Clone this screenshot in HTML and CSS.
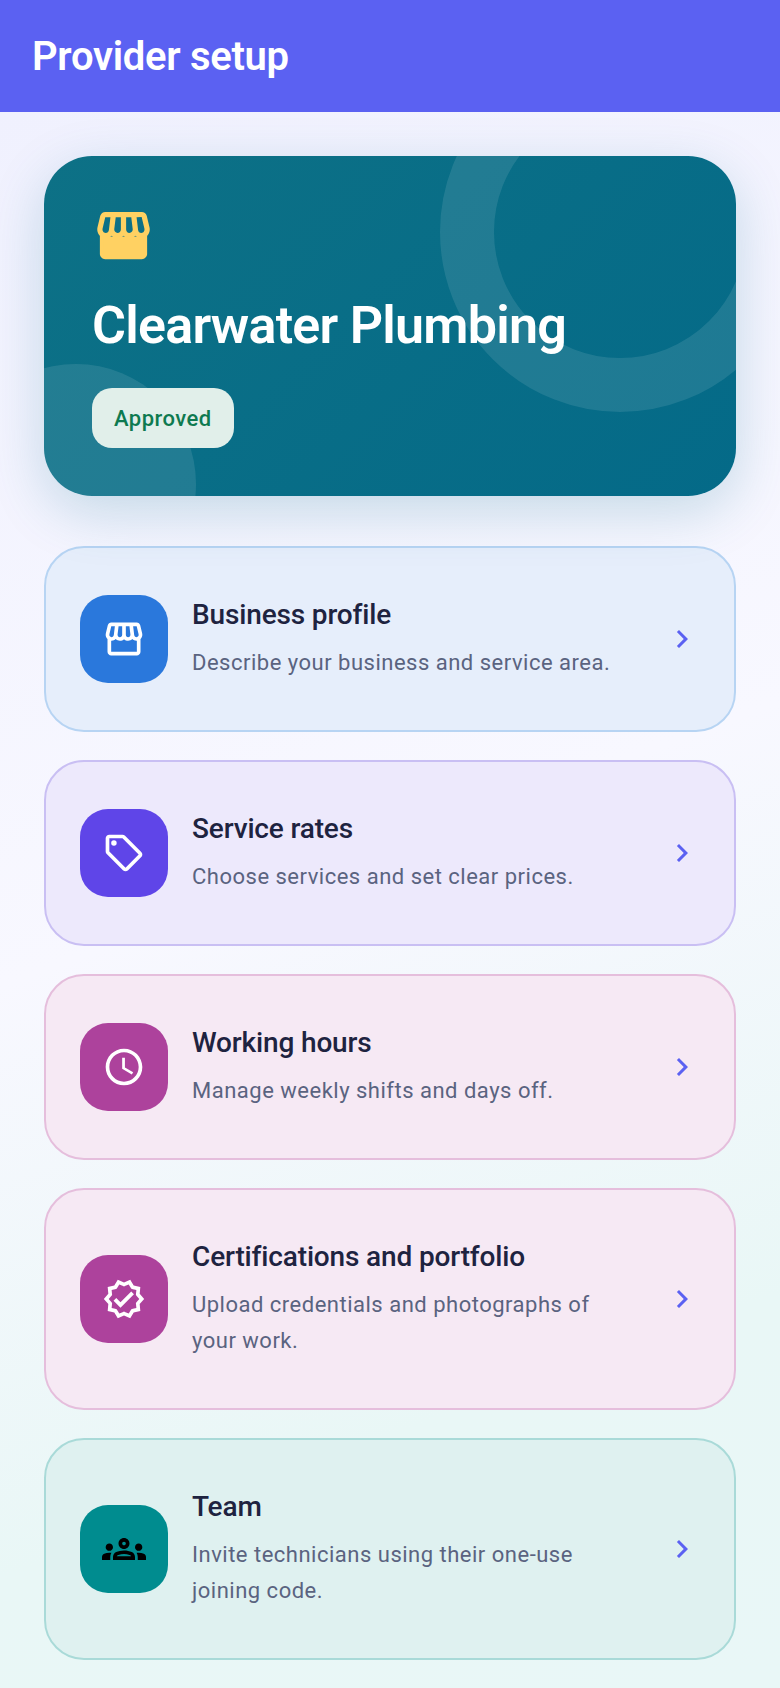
FILE: index.html
```html
<!DOCTYPE html>
<html lang="en">
<head>
<meta charset="utf-8">
<title>Provider setup</title>
<link rel="stylesheet" href="styles.css">
</head>
<body>
<header class="appbar"><h1 class="appbar-title">Provider setup</h1></header>
<main class="content">
  <section class="hero">
    <span class="hero-ring"></span>
    <span class="hero-disc"></span>
    <svg class="hero-icon" viewBox="0 0 24 24"><path d="M21.9 8.89l-1.05-4.37c-.22-.9-1-1.52-1.91-1.52H5.05c-.9 0-1.69.63-1.9 1.52L2.1 8.89c-.24 1.02-.02 2.06.62 2.88.08.11.19.19.28.29V19c0 1.1.9 2 2 2h14c1.1 0 2-.9 2-2v-6.94c.09-.09.2-.18.28-.28.64-.82.87-1.87.62-2.89zm-2.99-3.9l1.05 4.37c.1.42.01.84-.25 1.17-.14.18-.44.47-.94.47-.61 0-1.14-.49-1.21-1.14L16.98 5l1.93-.01zM13 5h1.96l.54 4.52c.05.39-.07.78-.33 1.07-.22.26-.54.41-.95.41-.67 0-1.22-.59-1.22-1.31V5zM8.49 9.52L9.04 5H11v4.69c0 .72-.55 1.31-1.29 1.31-.34 0-.65-.15-.89-.41-.25-.29-.37-.68-.33-1.07zm-4.45-.16L5.05 5h1.97l-.58 4.86c-.08.65-.6 1.14-1.21 1.14-.49 0-.8-.29-.93-.47-.27-.32-.36-.75-.26-1.17zM5 19v-6.03c.08.01.15.03.23.03.87 0 1.66-.36 2.24-.95.6.6 1.4.95 2.31.95.87 0 1.65-.36 2.23-.93.59.57 1.39.93 2.29.93.84 0 1.64-.35 2.24-.95.58.59 1.37.95 2.24.95.08 0 .15-.02.23-.03V19H5z"/><rect x="4.5" y="12.4" width="15" height="7.2"/></svg>
    <h2 class="hero-title">Clearwater Plumbing</h2>
    <span class="badge">Approved</span>
  </section>

  <a class="row row-blue">
    <span class="tile tile-blue"><svg class="glyph" viewBox="0 0 24 24"><path d="M21.9 8.89l-1.05-4.37c-.22-.9-1-1.52-1.91-1.52H5.05c-.9 0-1.69.63-1.9 1.52L2.1 8.89c-.24 1.02-.02 2.06.62 2.88.08.11.19.19.28.29V19c0 1.1.9 2 2 2h14c1.1 0 2-.9 2-2v-6.94c.09-.09.2-.18.28-.28.64-.82.87-1.87.62-2.89zm-2.99-3.9l1.05 4.37c.1.42.01.84-.25 1.17-.14.18-.44.47-.94.47-.61 0-1.14-.49-1.21-1.14L16.98 5l1.93-.01zM13 5h1.96l.54 4.52c.05.39-.07.78-.33 1.07-.22.26-.54.41-.95.41-.67 0-1.22-.59-1.22-1.31V5zM8.49 9.52L9.04 5H11v4.69c0 .72-.55 1.31-1.29 1.31-.34 0-.65-.15-.89-.41-.25-.29-.37-.68-.33-1.07zm-4.45-.16L5.05 5h1.97l-.58 4.86c-.08.65-.6 1.14-1.21 1.14-.49 0-.8-.29-.93-.47-.27-.32-.36-.75-.26-1.17zM5 19v-6.03c.08.01.15.03.23.03.87 0 1.66-.36 2.24-.95.6.6 1.4.95 2.31.95.87 0 1.65-.36 2.23-.93.59.57 1.39.93 2.29.93.84 0 1.64-.35 2.24-.95.58.59 1.37.95 2.24.95.08 0 .15-.02.23-.03V19H5z"/></svg></span>
    <span class="row-text"><span class="row-title">Business profile</span><span class="row-desc">Describe your business and service area.</span></span>
    <svg class="chevron" viewBox="0 0 24 24"><path d="M10 6L8.59 7.41 13.17 12l-4.58 4.59L10 18l6-6z"/></svg>
  </a>

  <a class="row row-violet">
    <span class="tile tile-violet"><svg class="glyph" viewBox="0 0 24 24"><path d="M21.41 11.41l-8.83-8.83c-.37-.37-.88-.58-1.41-.58H4c-1.1 0-2 .9-2 2v7.17c0 .53.21 1.04.59 1.41l8.83 8.83c.78.78 2.05.78 2.83 0l7.17-7.17c.78-.78.78-2.04-.01-2.83zM12.83 20L4 11.17V4h7.17L20 12.83 12.83 20z"/><circle cx="6.5" cy="6.5" r="1.5"/></svg></span>
    <span class="row-text"><span class="row-title">Service rates</span><span class="row-desc">Choose services and set clear prices.</span></span>
    <svg class="chevron" viewBox="0 0 24 24"><path d="M10 6L8.59 7.41 13.17 12l-4.58 4.59L10 18l6-6z"/></svg>
  </a>

  <a class="row row-pink">
    <span class="tile tile-pink"><svg class="glyph" viewBox="0 0 24 24"><path d="M11.99 2C6.47 2 2 6.48 2 12s4.47 10 9.99 10C17.52 22 22 17.52 22 12S17.52 2 11.99 2zM12 20c-4.42 0-8-3.58-8-8s3.58-8 8-8 8 3.58 8 8-3.58 8-8 8z"/><path d="M12.5 7H11v6l5.25 3.15.75-1.23-4.5-2.67z"/></svg></span>
    <span class="row-text"><span class="row-title">Working hours</span><span class="row-desc">Manage weekly shifts and days off.</span></span>
    <svg class="chevron" viewBox="0 0 24 24"><path d="M10 6L8.59 7.41 13.17 12l-4.58 4.59L10 18l6-6z"/></svg>
  </a>

  <a class="row row-pink">
    <span class="tile tile-pink"><svg class="glyph" viewBox="0 0 24 24"><path d="M23 11.99l-2.44-2.79.34-3.69-3.61-.82L15.4 1.5 12 2.96 8.6 1.5 6.71 4.69 3.1 5.5l.34 3.7L1 11.99l2.44 2.79-.34 3.7 3.61.82L8.6 22.5l3.4-1.47 3.4 1.46 1.89-3.19 3.61-.82-.34-3.69L23 11.99zm-3.95 1.48l-.56.65.08.85.18 1.95-1.9.43-.84.19-.44.74-.99 1.68-1.78-.77-.8-.34-.79.34-1.78.77-.99-1.67-.44-.74-.84-.19-1.9-.43.18-1.96.08-.85-.56-.65L3.67 12l1.29-1.48.56-.65-.09-.85-.18-1.94 1.9-.43.84-.19.44-.74.99-1.68 1.78.77.8.34.79-.34 1.78-.77.99 1.68.44.74.84.19 1.9.43-.18 1.95-.08.85.56.65 1.29 1.47-1.28 1.47z"/><path d="M10.09 13.75l-2.32-2.33-1.48 1.49 3.8 3.81 7.34-7.36-1.48-1.49z"/></svg></span>
    <span class="row-text"><span class="row-title">Certifications and portfolio</span><span class="row-desc">Upload credentials and photographs of your work.</span></span>
    <svg class="chevron" viewBox="0 0 24 24"><path d="M10 6L8.59 7.41 13.17 12l-4.58 4.59L10 18l6-6z"/></svg>
  </a>

  <a class="row row-teal">
    <span class="tile tile-teal"><svg class="glyph glyph-dark" viewBox="0 0 24 24"><path d="M4 13c1.1 0 2-.9 2-2 0-1.1-.9-2-2-2s-2 .9-2 2c0 1.1.9 2 2 2zm1.13 1.1c-.37-.06-.74-.1-1.13-.1-.99 0-1.93.21-2.78.58C.48 14.9 0 15.62 0 16.43V18h4.5v-1.61c0-.83.23-1.61.63-2.29zM20 13c1.1 0 2-.9 2-2 0-1.1-.9-2-2-2s-2 .9-2 2c0 1.1.9 2 2 2zm4 3.43c0-.81-.48-1.53-1.22-1.85-.85-.37-1.79-.58-2.78-.58-.39 0-.76.04-1.13.1.4.68.63 1.46.63 2.29V18H24v-1.57zm-7.76-2.78C15.07 13.13 13.62 12.75 12 12.75c-1.62 0-3.07.39-4.24.9C6.68 14.13 6 15.21 6 16.39V18h12v-1.61c0-1.18-.68-2.26-1.76-2.74zM8.07 16c.09-.23.13-.39.91-.69.97-.38 1.99-.56 3.02-.56s2.05.18 3.02.56c.77.3.81.46.91.69H8.07zM12 8c.55 0 1 .45 1 1s-.45 1-1 1-1-.45-1-1 .45-1 1-1m0-2c-1.66 0-3 1.34-3 3s1.34 3 3 3 3-1.34 3-3-1.34-3-3-3z"/></svg></span>
    <span class="row-text"><span class="row-title">Team</span><span class="row-desc">Invite technicians using their one-use joining code.</span></span>
    <svg class="chevron" viewBox="0 0 24 24"><path d="M10 6L8.59 7.41 13.17 12l-4.58 4.59L10 18l6-6z"/></svg>
  </a>
</main>
</body>
</html>
```

FILE: styles.css
```css
* { box-sizing: border-box; }
html, body { margin: 0; padding: 0; }
body {
  min-height: 1688px;
  font-family: Roboto, "Noto Sans", sans-serif;
  background: linear-gradient(160deg, #eff0fe 0%, #f8f8ff 50%, #e9f7f6 80%, #e9f7f7 100%);
}
.appbar {
  height: 112px;
  background: #5b61f2;
  display: flex;
  align-items: center;
  padding: 0 32px;
}
.appbar-title {
  margin: 0;
  color: #fff;
  font-size: 40px;
  font-weight: 600;
  letter-spacing: -0.3px;
}
.content {
  padding: 44px 44px 28px;
  display: flex;
  flex-direction: column;
  gap: 28px;
}
.hero {
  position: relative;
  overflow: hidden;
  height: 340px;
  margin-bottom: 22px;
  padding: 48px;
  border-radius: 48px;
  background: linear-gradient(135deg, #0d7186 0%, #046a88 100%);
  box-shadow: 0 16px 56px rgba(4, 105, 135, 0.2);
  display: flex;
  flex-direction: column;
  align-items: flex-start;
}
.hero-ring {
  position: absolute;
  top: -104px;
  right: -64px;
  width: 360px;
  height: 360px;
  border: 54px solid rgba(255, 255, 255, 0.1);
  border-radius: 50%;
}
.hero-disc {
  position: absolute;
  left: -88px;
  bottom: -108px;
  width: 240px;
  height: 240px;
  border-radius: 50%;
  background: rgba(255, 255, 255, 0.1);
}
.hero-icon {
  position: relative;
  width: 63px;
  height: 63px;
  fill: #ffd162;
}
.hero-title {
  position: relative;
  margin: 25px 0 0;
  color: #fff;
  font-size: 52px;
  line-height: 68px;
  font-weight: 600;
  letter-spacing: -0.75px;
}
.badge {
  position: relative;
  margin-top: 28px;
  height: 60px;
  padding: 0 22px;
  display: flex;
  align-items: center;
  border-radius: 20px;
  background: #e1efea;
  color: #0e7a50;
  font-size: 22px;
  font-weight: 500;
  letter-spacing: 0.45px;
}
.row {
  display: flex;
  align-items: center;
  gap: 24px;
  padding: 47px 34px;
  border: 2px solid;
  border-radius: 40px;
}
.row-blue { background: #e6eefb; border-color: #b7d4f3; }
.row-violet { background: #ede9fc; border-color: #c9bff3; }
.row-pink { background: #f6e9f4; border-color: #e5bedc; }
.row-teal { background: #dff1f0; border-color: #a9dad8; }
.tile {
  flex: none;
  width: 88px;
  height: 88px;
  border-radius: 28px;
  display: flex;
  align-items: center;
  justify-content: center;
}
.tile-blue { background: #2a78dc; }
.tile-violet { background: #5f45e8; }
.tile-pink { background: #ad429c; }
.tile-teal { background: #008c8f; }
.glyph { width: 44px; height: 44px; fill: #fff; }
.glyph-dark { fill: #000; }
.row-text {
  flex: 1;
  min-width: 0;
  padding: 2px 8px 2px 0;
  display: flex;
  flex-direction: column;
  gap: 12px;
}
.row-title {
  font-size: 28px;
  line-height: 36px;
  font-weight: 500;
  letter-spacing: -0.15px;
  color: #1e2340;
}
.row-desc {
  font-size: 22px;
  line-height: 36px;
  letter-spacing: 0.5px;
  color: #5a6380;
}
.chevron { flex: none; width: 36px; height: 36px; fill: #5b61f2; }
```
